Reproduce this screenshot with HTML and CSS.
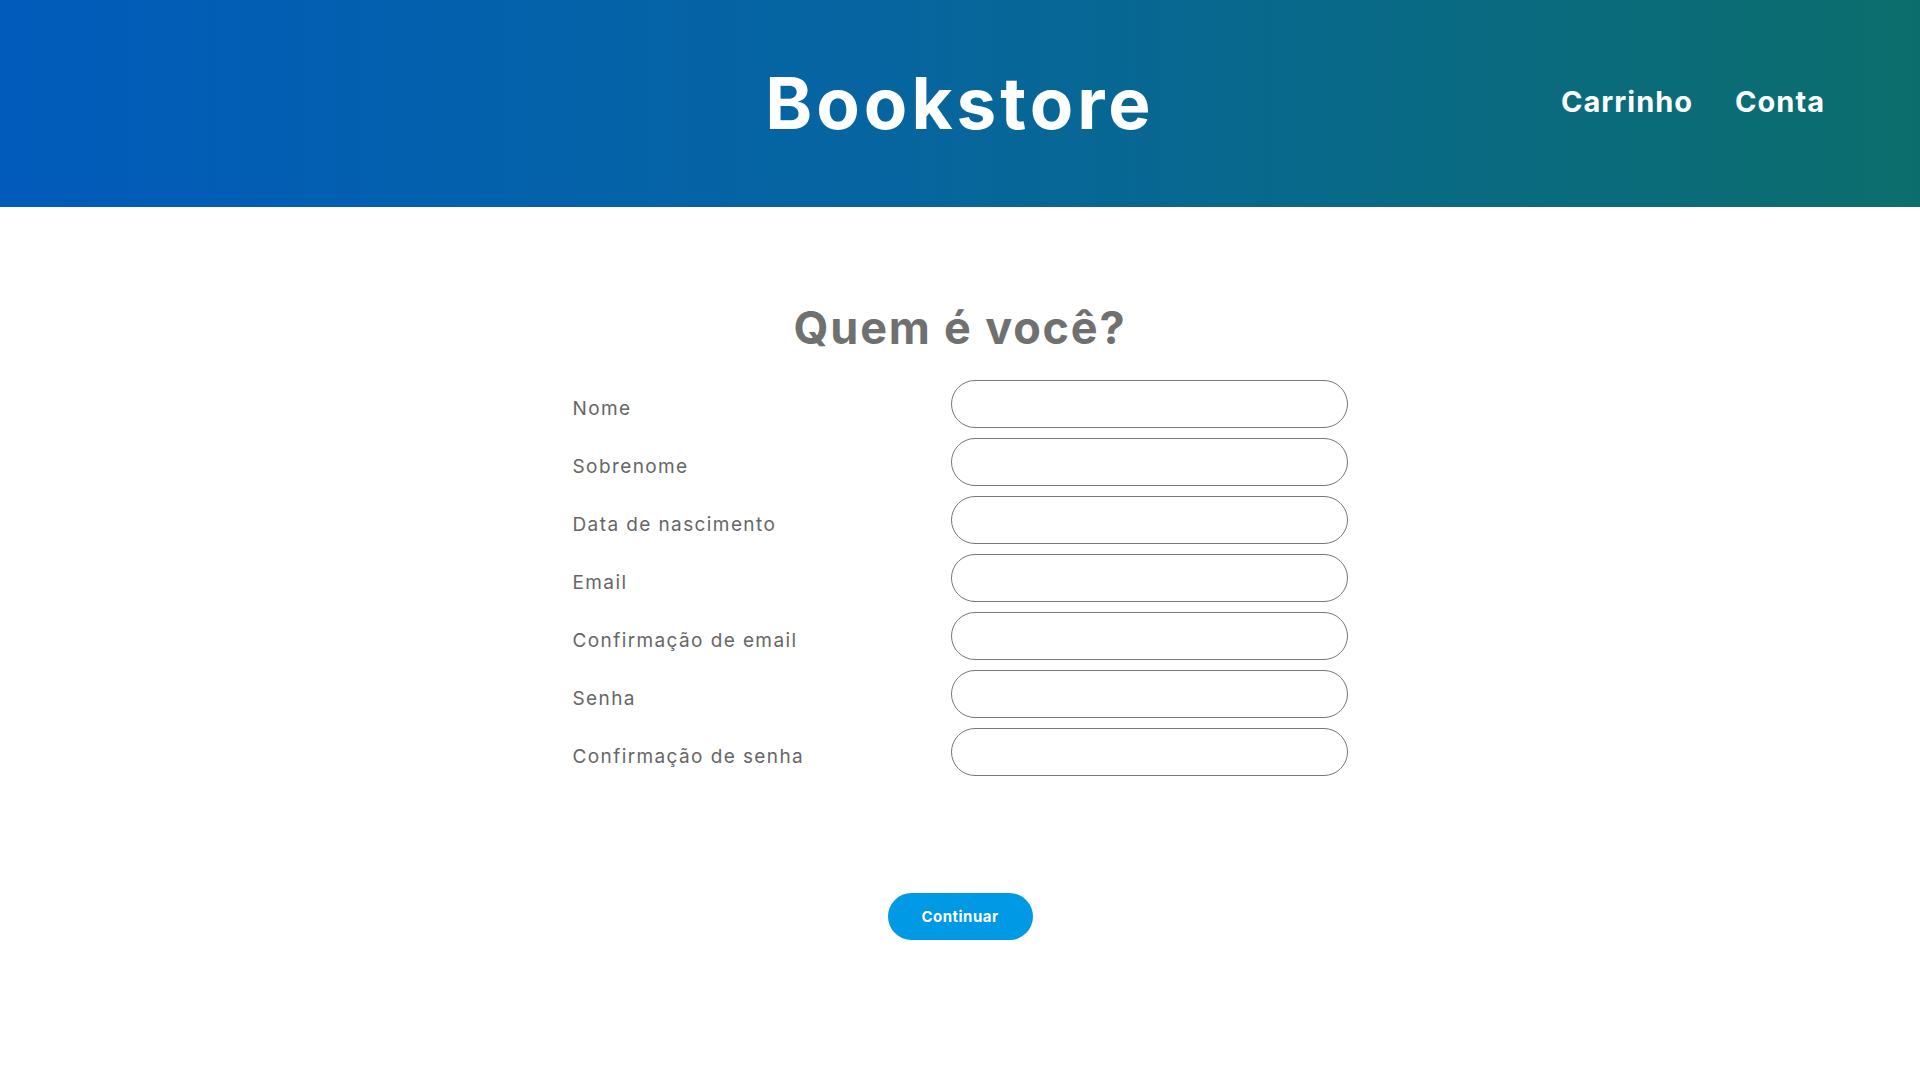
FILE: index.html
```html
<!DOCTYPE html>
<html lang="pt-BR">
<head>
<meta charset="utf-8">
<title>Bookstore</title>
<link rel="stylesheet" href="styles.css">
</head>
<body>
<header class="topbar">
  <div class="topbar-side"></div>
  <h1 class="brand">Bookstore</h1>
  <nav class="nav">
    <a class="nav-link" href="#">Carrinho</a>
    <a class="nav-link" href="#">Conta</a>
  </nav>
</header>
<main class="content">
  <h2 class="page-title">Quem é você?</h2>
  <form class="signup">
    <label class="field-label" for="nome">Nome</label>
    <input class="field-input" id="nome" type="text">
    <label class="field-label" for="sobrenome">Sobrenome</label>
    <input class="field-input" id="sobrenome" type="text">
    <label class="field-label" for="nasc">Data de nascimento</label>
    <input class="field-input" id="nasc" type="text">
    <label class="field-label" for="email">Email</label>
    <input class="field-input" id="email" type="text">
    <label class="field-label" for="email2">Confirmação de email</label>
    <input class="field-input" id="email2" type="text">
    <label class="field-label" for="senha">Senha</label>
    <input class="field-input" id="senha" type="password">
    <label class="field-label" for="senha2">Confirmação de senha</label>
    <input class="field-input" id="senha2" type="password">
  </form>
  <div class="actions">
    <button class="btn-primary" type="button">Continuar</button>
  </div>
</main>
</body>
</html>
```

FILE: styles.css
```css
* { box-sizing: border-box; }
html, body { margin: 0; padding: 0; }
body {
  font-family: "Inter", "Liberation Sans", sans-serif;
  background: #ffffff;
  color: #666666;
}
.topbar {
  height: 207px;
  display: grid;
  grid-template-columns: 1fr auto 1fr;
  align-items: center;
  background: linear-gradient(to right, #005bbb 0%, #0665a0 45%, #0c6e6c 100%);
}
.brand {
  margin: 0;
  font-size: 71px;
  font-weight: 700;
  letter-spacing: 4px;
  color: #ffffff;
  line-height: 1;
  padding-top: 0;
}
.nav {
  display: flex;
  justify-content: flex-end;
  gap: 42px;
  padding-right: 95px;
  padding-bottom: 4px;
}
.nav-link {
  color: #ffffff;
  text-decoration: none;
  font-size: 29px;
  font-weight: 700;
  letter-spacing: 1px;
}
.content {
  display: flex;
  flex-direction: column;
  align-items: center;
}
.page-title {
  margin: 95px 0 0 0;
  font-size: 45px;
  line-height: 52px;
  font-weight: 700;
  color: #707070;
  letter-spacing: 1.8px;
}
.signup {
  margin-top: 26px;
  display: grid;
  grid-template-columns: 378px 397px;
  row-gap: 10px;
  align-items: center;
}
.field-label {
  font-size: 19px;
  color: #666666;
  letter-spacing: 1.4px;
  padding-top: 9px;
}
.field-input {
  height: 48px;
  border: 1px solid #777777;
  border-radius: 24px;
  background: #ffffff;
  padding: 0 20px;
  font-size: 18px;
  font-family: inherit;
  outline: none;
}
.actions {
  margin-top: 117px;
}
.btn-primary {
  width: 145px;
  height: 47px;
  border: none;
  border-radius: 24px;
  background: #0099e6;
  color: #ffffff;
  font-family: inherit;
  font-weight: 700;
  font-size: 15px;
  letter-spacing: 0.5px;
  cursor: pointer;
}
```
